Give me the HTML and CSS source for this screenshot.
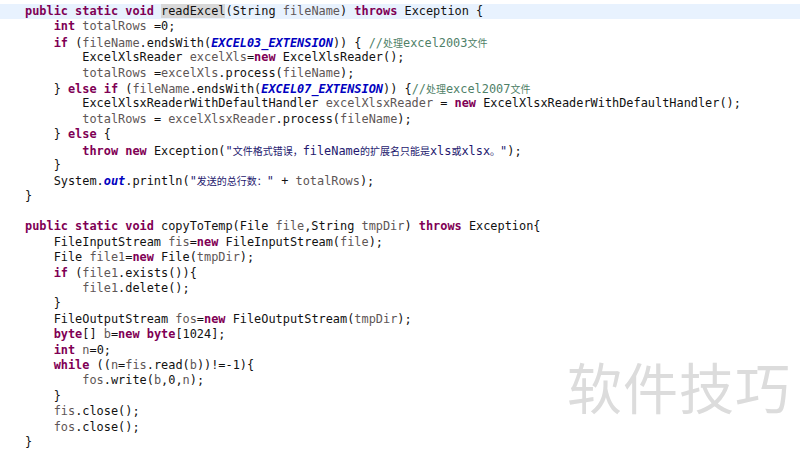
FILE: index.html
```html
<!DOCTYPE html>
<html lang="zh">
<head>
<meta charset="utf-8">
<link rel="stylesheet" href="styles.css">
</head>
<body>
<div class="editor">
<div class="line hl"><span class="k">public static void</span> <span class="sel">readExcel</span>(String <span class="v">fileName</span>) <span class="k">throws</span> Exception {</div>
<div class="line">    <span class="k">int</span> <span class="v">totalRows</span> =0;</div>
<div class="line">    <span class="k">if</span> (<span class="v">fileName</span>.endsWith(<span class="c">EXCEL03_EXTENSION</span>)) { <span class="cm">//<span class="zh">处理</span>excel2003<span class="zh">文件</span></span></div>
<div class="line">        ExcelXlsReader <span class="v">excelXls</span>=<span class="k">new</span> ExcelXlsReader();</div>
<div class="line">        <span class="v">totalRows</span> =<span class="v">excelXls</span>.process(<span class="v">fileName</span>);</div>
<div class="line">    } <span class="k">else if</span> (<span class="v">fileName</span>.endsWith(<span class="c">EXCEL07_EXTENSION</span>)) {<span class="cm">//<span class="zh">处理</span>excel2007<span class="zh">文件</span></span></div>
<div class="line">        ExcelXlsxReaderWithDefaultHandler <span class="v">excelXlsxReader</span> = <span class="k">new</span> ExcelXlsxReaderWithDefaultHandler();</div>
<div class="line">        <span class="v">totalRows</span> = <span class="v">excelXlsxReader</span>.process(<span class="v">fileName</span>);</div>
<div class="line">    } <span class="k">else</span> {</div>
<div class="line">        <span class="k">throw new</span> Exception(<span class="s">"<span class="zh">文件格式错误，</span>fileName<span class="zh">的扩展名只能是</span>xls<span class="zh">或</span>xlsx<span class="zh">。</span>"</span>);</div>
<div class="line">    }</div>
<div class="line">    System.<span class="c">out</span>.println(<span class="s">"<span class="zh">发送的总行数：</span>"</span> + <span class="v">totalRows</span>);</div>
<div class="line">}</div>
<div class="line"> </div>
<div class="line"><span class="k">public static void</span> copyToTemp(File <span class="v">file</span>,String <span class="v">tmpDir</span>) <span class="k">throws</span> Exception{</div>
<div class="line">    FileInputStream <span class="v">fis</span>=<span class="k">new</span> FileInputStream(<span class="v">file</span>);</div>
<div class="line">    File <span class="v">file1</span>=<span class="k">new</span> File(<span class="v">tmpDir</span>);</div>
<div class="line">    <span class="k">if</span> (<span class="v">file1</span>.exists()){</div>
<div class="line">        <span class="v">file1</span>.delete();</div>
<div class="line">    }</div>
<div class="line">    FileOutputStream <span class="v">fos</span>=<span class="k">new</span> FileOutputStream(<span class="v">tmpDir</span>);</div>
<div class="line">    <span class="k">byte</span>[] <span class="v">b</span>=<span class="k">new byte</span>[1024];</div>
<div class="line">    <span class="k">int</span> <span class="v">n</span>=0;</div>
<div class="line">    <span class="k">while</span> ((<span class="v">n</span>=<span class="v">fis</span>.read(<span class="v">b</span>))!=-1){</div>
<div class="line">        <span class="v">fos</span>.write(<span class="v">b</span>,0,<span class="v">n</span>);</div>
<div class="line">    }</div>
<div class="line">    <span class="v">fis</span>.close();</div>
<div class="line">    <span class="v">fos</span>.close();</div>
<div class="line">}</div>
</div>
<div class="watermark">软件技巧</div>
</body>
</html>
```

FILE: styles.css
```css
html, body {
  margin: 0;
  padding: 0;
  background: #ffffff;
}
body {
  width: 800px;
  height: 450px;
  overflow: hidden;
  position: relative;
}
.editor {
  padding-top: 4px;
  font-family: "DejaVu Sans Mono", "Noto Sans CJK SC", monospace;
  font-size: 11.9px;
  color: #111111;
}
.line {
  white-space: pre;
  height: 15.4px;
  line-height: 15.4px;
  padding-left: 25px;
}
.hl {
  background: #e8f2fe;
}
.sel {
  background: #d8d8d8;
}
.k {
  color: #7f0055;
  font-weight: bold;
}
.v {
  color: #5e5656;
}
.c {
  color: #0000c0;
  font-weight: bold;
  font-style: italic;
}
.cm {
  color: #4f7f68;
}
.s {
  color: #24186e;
}
.zh {
  font-family: "Noto Sans CJK SC", sans-serif;
  font-size: 10px;
}
.watermark {
  position: absolute;
  left: 567px;
  top: 352px;
  font-family: "Noto Sans CJK SC", sans-serif;
  font-size: 55px;
  line-height: 1.2;
  color: #dcdcdc;
  letter-spacing: 1px;
}
```
